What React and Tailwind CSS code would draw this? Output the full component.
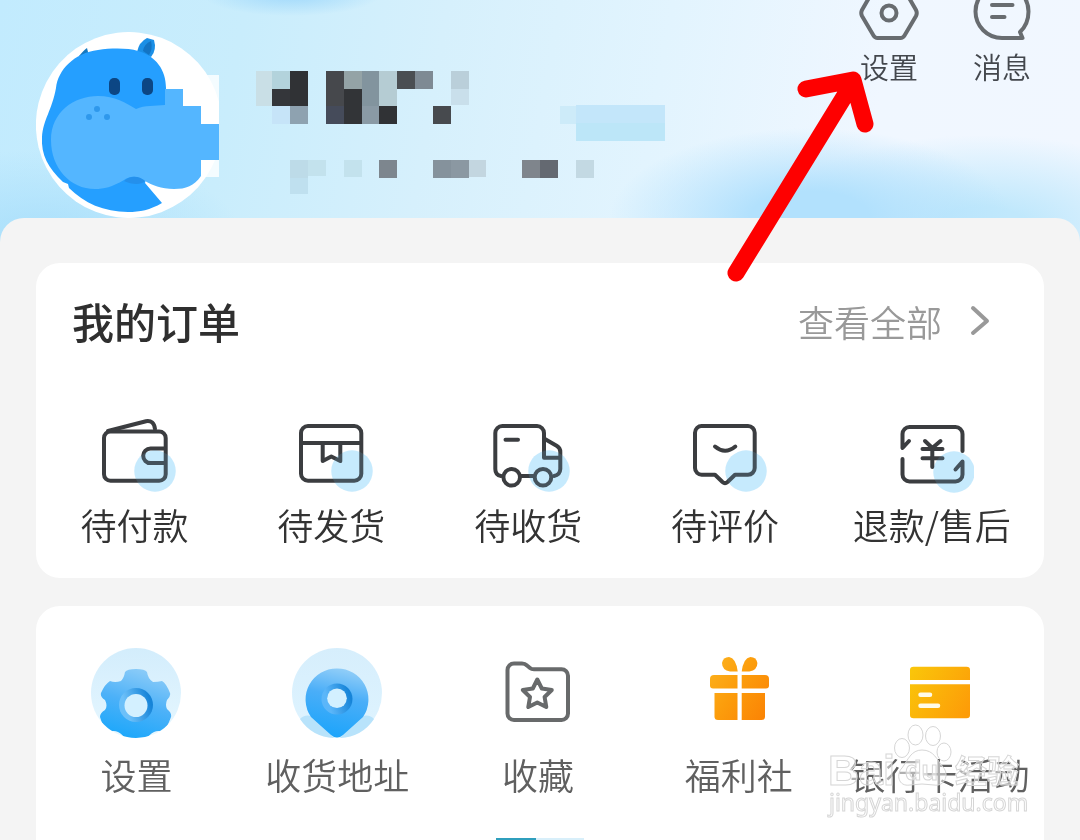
const NAME_BLOCKS = [
  [256, 71, 16, 35, '#c9dfe6'],
  [272, 71, 18, 18, '#b3d3dc'],
  [290, 71, 18, 35, '#303235'],
  [272, 89, 18, 17, '#34363a'],
  [272, 106, 18, 18, '#c6e4f8'],
  [290, 106, 18, 18, '#8ea2b0'],
  [326, 71, 18, 35, '#46484c'],
  [326, 106, 18, 18, '#454b5a'],
  [344, 71, 18, 18, '#94a3a6'],
  [344, 89, 18, 35, '#323437'],
  [362, 71, 17, 35, '#82949e'],
  [362, 106, 17, 18, '#8a9aa5'],
  [379, 71, 18, 35, '#b5ccd3'],
  [379, 106, 18, 18, '#303235'],
  [397, 71, 18, 18, '#4a4e52'],
  [415, 71, 18, 18, '#7e8a94'],
  [433, 106, 18, 18, '#474a4e'],
  [451, 71, 18, 18, '#bacfda'],
  [451, 89, 18, 16, '#c9dfeb'],
  [290, 160, 18, 18, '#bddbe8'],
  [290, 178, 18, 16, '#bfe0ef'],
  [308, 160, 18, 16, '#c3e2ed'],
  [344, 160, 18, 17, '#c3e2ed'],
  [379, 160, 18, 18, '#7d868e'],
  [433, 160, 18, 18, '#85929c'],
  [451, 160, 18, 18, '#8b98a2'],
  [469, 160, 17, 17, '#c3d6e0'],
  [522, 160, 18, 18, '#7f858c'],
  [540, 160, 18, 18, '#646971'],
  [576, 160, 18, 18, '#c3d9e3'],
  [560, 106, 16, 18, '#cdebf9'],
  [576, 105, 89, 18, '#c3e6fa'],
  [576, 123, 89, 18, '#bce6f8'],
];

function Avatar() {
  return (
    <svg viewBox="36 32 186 186" className="size-[186px] shrink-0" role="img" aria-label="头像">
      <path d="M219 148A93 93 0 1 1 219 102Z" fill="#fff" />
      <path d="M201 75H219V177H201Z" fill="#fff" fillOpacity="0.8" />
      <path d="M79 56Q84 50 87 48L89 56Z" fill="#1679c0" />
      <path d="M137 52Q139 42 147 38L154 40Q157 50 151 57Z" fill="#1b8fe6" />
      <path d="M143 51Q144 44 151 41Q153 49 149 55Z" fill="#1374c4" />
      <path
        d="M42 137C43 120 52 110 56 88C58 70 74 53 98 50C112 48 128 48 138 51C156 56 166 70 166 88V110L145 183L162 203C150 210 140 212 128 212C104 212 84 203 69 188L68 184L63 182C48 168 41 155 42 137Z"
        fill="#259fff"
      />
      <path
        d="M51 140C51 112 74 96 98 96C115 96 126 103 136 109C145 105 155 106 165 105V89H183V106H201V124H219V160H201V176C194 186 186 189 174 189C161 189 152 185 145 181C137 175 129 176 124 180C112 187 104 189 95 189C70 189 51 168 51 140Z"
        fill="#54b6ff"
      />
      <path d="M124 181C131 175 139 176 145 181C142 185 132 185 124 181Z" fill="#2490ec" />
      <rect x="109" y="78" width="11" height="17" rx="5" fill="#0c4684" />
      <rect x="142" y="78" width="11" height="17" rx="5" fill="#0c4684" />
      <g fill="#2f98ec">
        <circle cx="97" cy="109" r="3" />
        <circle cx="89" cy="117" r="3" />
        <circle cx="107" cy="117" r="3" />
      </g>
    </svg>
  );
}

function OrderIcon({ children, cx = 63, cy = 55 }) {
  return (
    <svg viewBox="0 0 84 78" className="h-[78px] w-[84px]" fill="none" aria-hidden="true">
      <g stroke="#3b3d40" strokeWidth="4" strokeLinecap="round" strokeLinejoin="round">
        {children}
      </g>
      <circle cx={cx} cy={cy} r="20.7" fill="#8fd6fb" fillOpacity="0.5" className="mix-blend-multiply" />
      <circle cx={cx} cy={cy} r="20.7" fill="#c5eafd" fillOpacity="0.15" />
    </svg>
  );
}

const orders = [
  {
    label: '待付款',
    icon: (
      <OrderIcon>
        <rect x="12" y="15.5" width="61.7" height="49.2" rx="6.5" />
        <path d="M16 15L54 5.2Q62 4 63 13" />
        <path d="M73 32.5H58.5a7.2 7.2 0 0 0 0 14.6H73" />
      </OrderIcon>
    ),
  },
  {
    label: '待发货',
    icon: (
      <OrderIcon>
        <rect x="12" y="10" width="60.3" height="54.7" rx="7" />
        <path d="M12 27H72" />
        <path d="M33.7 27V45L42.3 40.5L51.3 45V27" />
      </OrderIcon>
    ),
  },
  {
    label: '待收货',
    icon: (
      <OrderIcon>
        <path d="M15 60Q9.3 59 9.3 53V17a7 7 0 0 1 7-7H51a7 7 0 0 1 7 7V41.7H74" />
        <path d="M58 22.5L71 30Q74.3 32 74.3 36V53Q74 59 68 60" />
        <path d="M35 60H48M19.5 23.7H32" />
        <circle cx="25.7" cy="61.3" r="8.3" fill="#fff" />
        <circle cx="57" cy="61.3" r="8.3" />
      </OrderIcon>
    ),
  },
  {
    label: '待评价',
    icon: (
      <OrderIcon>
        <path d="M19 10H65a6.7 6.7 0 0 1 6.7 6.7V52a6.7 6.7 0 0 1-6.7 6.7H52L44.5 66Q42 68.3 39.5 66L32 58.7H19A6.7 6.7 0 0 1 12 52V16.7A6.7 6.7 0 0 1 19 10Z" />
        <path d="M32 30.5Q42 39 52.3 30.5" />
      </OrderIcon>
    ),
  },
  {
    label: '退款/售后',
    icon: (
      <OrderIcon cx={64} cy={56}>
        <path d="M19 25L12.5 32V18a7 7 0 0 1 7-7H65.5a7 7 0 0 1 7 7V35" />
        <path d="M12.5 43V58.5a7 7 0 0 0 7 7H65.5a7 7 0 0 0 7-7V45.5L65.500 53.500" />
        <path d="M35 25L42.3 32L50.5 25M32.5 33H52.5M32.5 42.3H52.5M42.3 33V51" />
      </OrderIcon>
    ),
  },
];

function GearIcon() {
  return (
    <svg viewBox="0 0 90 90" className="size-[90px]" aria-hidden="true">
      <defs>
        <linearGradient id="gear-bg" x1="0" y1="0" x2="0" y2="1">
          <stop offset="0" stopColor="#d3edfc" />
          <stop offset="1" stopColor="#e6f7ff" />
        </linearGradient>
        <linearGradient id="gear-fill" x1="0.7" y1="0" x2="0.4" y2="1">
          <stop offset="0" stopColor="#8fcdf8" />
          <stop offset="0.5" stopColor="#4cb1f8" />
          <stop offset="1" stopColor="#1ba7fb" />
        </linearGradient>
        <linearGradient id="gear-ring" x1="0" y1="0.6" x2="1" y2="0.3">
          <stop offset="0.2" stopColor="#6cc0f9" />
          <stop offset="0.9" stopColor="#1684d8" />
        </linearGradient>
        <clipPath id="gear-clip">
          <circle cx="45" cy="45" r="45" />
        </clipPath>
      </defs>
      <circle cx="45" cy="45" r="45" fill="url(#gear-bg)" />
      <g clipPath="url(#gear-clip)">
        <path
          d="M30 33Q33 30 34 24Q36 21 45 21Q54 21 56 24Q57 31 62 34Q67 34 71 33Q75 35 79 45Q80 48 76 52Q74 57 76 61Q81 65 80 69Q76 80 72 84Q67 82 63 84Q57 87 56 92H34Q33 87 27 84Q23 82 18 84Q12 80 9 69Q9 65 14 62Q17 58 14 52Q9 49 10 45Q14 36 19 33Q24 35 30 33Z"
          fill="url(#gear-fill)"
        />
        <circle cx="45" cy="57" r="17" fill="url(#gear-ring)" />
      </g>
      <circle cx="45" cy="57.5" r="11.5" fill="#d3f0ff" />
    </svg>
  );
}

function PinIcon() {
  return (
    <svg viewBox="0 0 90 90" className="size-[90px]" aria-hidden="true">
      <defs>
        <linearGradient id="pin-bg" x1="0" y1="0" x2="0" y2="1">
          <stop offset="0" stopColor="#d6eefc" />
          <stop offset="1" stopColor="#dff4ff" />
        </linearGradient>
        <linearGradient id="pin-fill" x1="0.6" y1="0" x2="0.4" y2="1">
          <stop offset="0" stopColor="#92cef8" />
          <stop offset="0.4" stopColor="#4aaef8" />
          <stop offset="1" stopColor="#1ba4fb" />
        </linearGradient>
        <linearGradient id="pin-ring" x1="0" y1="0.6" x2="1" y2="0.3">
          <stop offset="0.2" stopColor="#5bb6f9" />
          <stop offset="0.9" stopColor="#1684d8" />
        </linearGradient>
      </defs>
      <circle cx="45" cy="45" r="45" fill="url(#pin-bg)" />
      <path d="M8 71Q12 66 20 68L42 90Q20 89 8 71ZM82 71Q78 66 70 68L48 90Q70 89 82 71Z" fill="#b8e3fb" />
      <path d="M45 20.5A31 31 0 0 1 71 69L51 87Q45 92 39 87L19 69A31 31 0 0 1 45 20.500Z" fill="url(#pin-fill)" />
      <circle cx="45" cy="51" r="15.5" fill="url(#pin-ring)" />
      <circle cx="45" cy="50.3" r="9.8" fill="#d3f0ff" />
    </svg>
  );
}

function FolderIcon() {
  return (
    <svg
      viewBox="0 0 90 90"
      className="size-[90px]"
      fill="none"
      stroke="#686a6b"
      strokeWidth="4"
      strokeLinejoin="round"
      aria-hidden="true"
    >
      <path d="M21 15.5H29Q32 15.5 34 17.5L37 20Q38.5 21.3 41 21.3H68.5A6.5 6.5 0 0 1 75 27.8V65.5A6.5 6.5 0 0 1 68.5 72H21A6.5 6.5 0 0 1 14.5 65.5V22A6.5 6.5 0 0 1 21 15.5Z" />
      <path
        d="M44.3 31.5L48.8 40.5L58.8 42L51.6 49L53.3 59L44.3 54.5L35.3 59L37 49L29.8 42L39.8 40.5Z"
        strokeWidth="4"
      />
    </svg>
  );
}

function GiftIcon() {
  return (
    <svg viewBox="0 0 90 90" className="size-[90px]" aria-hidden="true">
      <defs>
        <linearGradient id="gift-fill" gradientUnits="userSpaceOnUse" x1="16" y1="20" x2="75" y2="60">
          <stop offset="0" stopColor="#fcb01c" />
          <stop offset="0.45" stopColor="#fc9d0c" />
          <stop offset="1" stopColor="#fb8505" />
        </linearGradient>
      </defs>
      <g fill="url(#gift-fill)">
        <path d="M43.7 23.5H36Q28 22 28 15Q29 9 35 9Q42 10 43.7 23.5Z" />
        <path d="M47.7 23.5H55.4Q63.4 22 63.4 15Q62.4 9 56.4 9Q49.4 10 47.7 23.5Z" />
        <path d="M43.5 27V40.5H19Q16 40.5 16 37.5V31Q16 27 20 27Z" />
        <path d="M47.7 27V40.5H72Q75 40.5 75 37.5V31Q75 27 71 27Z" />
        <path d="M43.5 45V72H24Q20.5 72 20.5 68.5V45Z" />
        <path d="M47.7 45V72H67.5Q71 72 71 68.5V45Z" />
      </g>
    </svg>
  );
}

function CardIcon() {
  return (
    <svg viewBox="0 0 90 90" className="size-[90px]" aria-hidden="true">
      <defs>
        <linearGradient id="card-fill" gradientUnits="userSpaceOnUse" x1="15" y1="25" x2="75" y2="60">
          <stop offset="0" stopColor="#fac50a" />
          <stop offset="1" stopColor="#fd9c08" />
        </linearGradient>
      </defs>
      <g fill="url(#card-fill)">
        <path d="M15 32V22Q15 18.7 18.5 18.7H71.5Q75 18.7 75 22V32Z" />
        <path d="M15 36.3V67Q15 70.3 18.5 70.3H71.5Q75 70.3 75 67V36.3Z" />
      </g>
      <path d="M25.5 46.7H35M25.5 57.7H43" stroke="#fffbe8" strokeWidth="4.5" strokeLinecap="round" />
    </svg>
  );
}

const tools = [
  { label: '设置', icon: <GearIcon /> },
  { label: '收货地址', icon: <PinIcon /> },
  { label: '收藏', icon: <FolderIcon /> },
  { label: '福利社', icon: <GiftIcon /> },
  { label: '银行卡活动', icon: <CardIcon /> },
];

function Watermark() {
  return (
    <svg
      viewBox="824 720 204 100"
      className="pointer-events-none absolute right-4 bottom-5 h-[100px] w-[204px]"
      fill="#ffffff"
      fillOpacity="0.5"
      stroke="#d6d6d6"
      strokeWidth="1"
      aria-hidden="true"
    >
      <ellipse cx="902" cy="748" rx="7.5" ry="9.5" />
      <ellipse cx="915.5" cy="735" rx="7.5" ry="10" />
      <ellipse cx="933" cy="736" rx="7.5" ry="9.5" />
      <ellipse cx="944" cy="752" rx="7" ry="9" />
      <path d="M922 750C934 750 937 760 943 767C950 775 944 787 934 785Q922 783 910 785C898 787 896 774 902 768C908 760 911 750 922 750Z" />
      <g fontFamily="'Liberation Sans', 'Noto Sans CJK SC', sans-serif" fontWeight="700">
        <text x="828" y="785" fontSize="43">Bai</text>
        <text x="905" y="780" fontSize="27">du</text>
        <text x="955" y="783" fontSize="32">经验</text>
      </g>
      <text x="829" y="811" fontSize="23" fontWeight="400" fontFamily="'Noto Sans', sans-serif">jingyan.baidu.com</text>
    </svg>
  );
}

function App() {
  return (
    <div className="relative flex min-h-screen flex-col overflow-hidden bg-[#f4f4f4] font-['Noto_Sans_CJK_SC',sans-serif] font-[350] text-[#333]">
      <header className="flex items-start bg-[radial-gradient(ellipse_90px_22px_at_27%_-6px,#9fd8fb,transparent),radial-gradient(ellipse_200px_90px_at_75%_218px,#b2e1fd_30%,transparent),radial-gradient(ellipse_220px_90px_at_91%_225px,#c0e8fc_20%,transparent),radial-gradient(ellipse_200px_90px_at_4%_240px,#a9dffb,transparent),linear-gradient(100deg,#c2ebfe_0%,#c9edfc_22%,#d6f0fc_40%,#e2f4fe_60%,#f0f7ff_80%,#f1f7ff_100%)] pr-12 pb-6 pl-9">
        <div className="pt-8">
          <Avatar />
        </div>
        <svg
          viewBox="256 71 410 124"
          className="mt-[71px] ml-[34px] h-[124px] w-[410px]"
          shapeRendering="crispEdges"
          aria-hidden="true"
        >
          {NAME_BLOCKS.map(([x, y, w, h, fill]) => (
            <rect key={`${x}-${y}`} x={x} y={y} width={w} height={h} fill={fill} />
          ))}
        </svg>
        <nav className="ml-auto flex gap-[53px] text-[29px] leading-10 text-[#43474d]">
          <button type="button" className="flex w-[60px] flex-col items-center gap-0.5 whitespace-nowrap">
            <svg viewBox="0 0 60 44" className="h-11 w-[60px]" fill="none" stroke="#686c70" strokeWidth="4" strokeLinejoin="round" aria-hidden="true">
              <path d="M17.5-12H42.5Q44.5-12 45.5-10L57 10Q58.5 13 57 16L45.5 35.5Q44 38 41.5 38H18.5Q16 38 14.5 35.5L3 16Q1.5 13 3 10L14.5-10Q15.5-12 17.5-12Z" />
              <circle cx="30" cy="13" r="7.5" />
            </svg>
            设置
          </button>
          <button type="button" className="flex w-[60px] flex-col items-center gap-0.5 whitespace-nowrap">
            <svg viewBox="0 0 60 44" className="h-11 w-[60px]" fill="none" stroke="#686c70" strokeWidth="4" strokeLinecap="round" strokeLinejoin="round" aria-hidden="true">
              <path d="M50.5 38H30A26.5 26.500 0 1 1 56.500 11.500Q56.500 24 48 32Z" />
              <path d="M20 5H40.5M20 17H32.5" />
            </svg>
            消息
          </button>
        </nav>
      </header>

      <main className="-mt-6 flex flex-1 flex-col rounded-t-3xl bg-[#f4f4f4] px-9 pt-[45px]">
        <section className="rounded-3xl bg-white pt-[30px] pb-[30px]">
          <div className="flex items-center justify-between pr-[54px] pl-9">
            <h2 className="text-[42px] leading-14 font-medium text-[#2f2f2f]">我的订单</h2>
            <a href="#orders" className="flex items-center gap-7 text-4xl leading-14 text-[#999]">
              查看全部
              <svg viewBox="0 0 20 32" className="h-8 w-5" fill="none" stroke="#999" strokeWidth="4" strokeLinecap="round" strokeLinejoin="round" aria-hidden="true">
                <path d="M3 3L17 16L3 28" />
              </svg>
            </a>
          </div>
          <div className="mt-[67px] grid grid-cols-[1fr_1fr_1fr_1fr_1.1fr] pr-1">
            {orders.map((item) => (
              <button key={item.label} type="button" className="flex flex-col items-center gap-1.5 text-4xl leading-12 whitespace-nowrap">
                {item.icon}
                {item.label}
              </button>
            ))}
          </div>
        </section>

        <section className="relative mt-7 flex-1 rounded-t-3xl bg-white pt-[42px]">
          <div className="grid grid-cols-5 pr-1">
            {tools.map((item) => (
              <button key={item.label} type="button" className="flex flex-col items-center gap-3 text-4xl leading-12 whitespace-nowrap text-[#606060]">
                {item.icon}
                {item.label}
              </button>
            ))}
          </div>
          <div className="mx-auto mt-10 flex h-0.5 w-[88px] bg-[#d8effa]">
            <div className="w-10 bg-[#2f9fbd]" />
          </div>
          <Watermark />
        </section>
      </main>

      <svg
        viewBox="724 66 154 220"
        className="pointer-events-none absolute top-[66px] right-[202px] h-[220px] w-[154px]"
        fill="none"
        stroke="#fe0000"
        strokeWidth="17"
        strokeLinecap="round"
        strokeLinejoin="round"
        aria-hidden="true"
      >
        <path d="M736 273L852 84M806 89L853 80L865 124" />
      </svg>
    </div>
  );
}

export default App;
